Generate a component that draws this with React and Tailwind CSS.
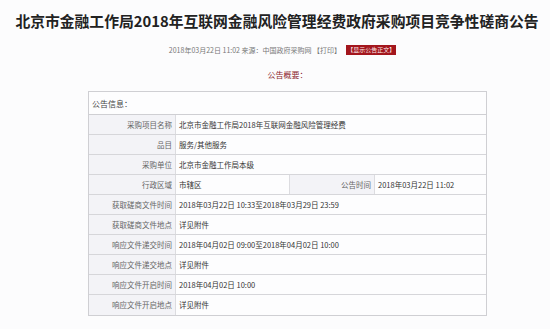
const rows = [
  { label: "采购项目名称", value: "北京市金融工作局2018年互联网金融风险管理经费" },
  { label: "品目", value: "服务/其他服务" },
  { label: "采购单位", value: "北京市金融工作局本级" },
  { label: "行政区域", value: "市辖区", extraLabel: "公告时间", extraValue: "2018年03月22日 11:02" },
  { label: "获取磋商文件时间", value: "2018年03月22日 10:33至2018年03月29日 23:59" },
  { label: "获取磋商文件地点", value: "详见附件" },
  { label: "响应文件递交时间", value: "2018年04月02日 09:00至2018年04月02日 10:00" },
  { label: "响应文件递交地点", value: "详见附件" },
  { label: "响应文件开启时间", value: "2018年04月02日 10:00" },
  { label: "响应文件开启地点", value: "详见附件" },
];

const App = () => {
  return (
    <div
      className="w-[550px] h-[329px] overflow-hidden bg-[#fcfcfd]"
      style={{ fontFamily: '"Noto Sans CJK SC", "Noto Sans", sans-serif' }}
    >
      {/* Title */}
      <h1 className="pt-[9px] pl-[4px] h-[33px] text-center text-[14.8px] leading-[24px] font-bold text-[#222] whitespace-nowrap">
        北京市金融工作局2018年互联网金融风险管理经费政府采购项目竞争性磋商公告
      </h1>

      {/* Date line */}
      <div className="mt-[12px] h-[10px] pl-[15px] flex items-center justify-center gap-[5px] text-[7px] leading-[10px] text-[#777] whitespace-nowrap">
        <span>2018年03月22日 11:02 来源：中国政府采购网 【打印】</span>
        <span className="bg-[#a3161d] text-[#fbe9ea] px-[1px] text-[6px] leading-[10px]">
          【显示公告正文】
        </span>
      </div>

      {/* Summary heading */}
      <div className="ml-[88px] w-[399px] mt-[15px] h-[10px] text-center text-[8px] leading-[10px] text-[#8b1d2c]">
        公告概要：
      </div>

      {/* Table */}
      <div className="ml-[88px] mt-[11px] w-[399px] border border-[#cfcfd3] bg-[#fdfdfe] text-[7.5px] leading-[19px]">
        <div className="h-[23px] flex items-center pl-[3px] text-[8px] text-[#444] border-b border-[#cfcfd3]">
          公告信息：
        </div>
        {rows.map((row) => (
          <div key={row.label} className="h-[20px] flex border-b border-[#d6d6da] last:border-b-0">
            <div className="w-[87px] shrink-0 bg-[#f3f3f7] border-r border-[#dcdce0] text-right pr-[3px] text-[#666] whitespace-nowrap">
              {row.label}
            </div>
            {row.extraLabel ? (
              <>
                <div className="w-[113px] shrink-0 pl-[3px] text-[#333]">{row.value}</div>
                <div className="w-[86px] shrink-0 bg-[#f3f3f7] border-l border-r border-[#dcdce0] text-right pr-[3px] text-[#666]">
                  {row.extraLabel}
                </div>
                <div className="flex-1 pl-[3px] text-[#333] whitespace-nowrap">{row.extraValue}</div>
              </>
            ) : (
              <div className="flex-1 pl-[3px] text-[#333] whitespace-nowrap">{row.value}</div>
            )}
          </div>
        ))}
      </div>
    </div>
  );
};

export default App;
